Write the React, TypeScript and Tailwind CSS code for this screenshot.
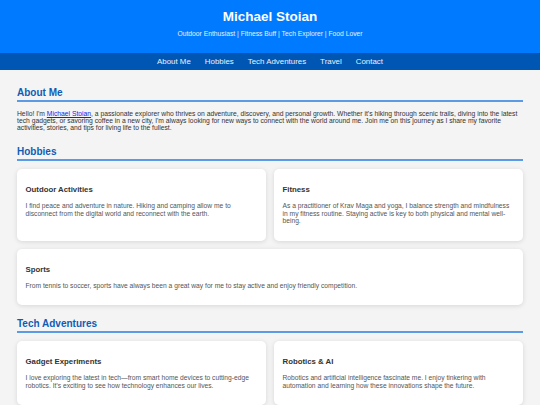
import React from "react";

type Card = { title: string; text: string; wide?: boolean };

const hobbies: Card[] = [
  {
    title: "Outdoor Activities",
    text: "I find peace and adventure in nature. Hiking and camping allow me to disconnect from the digital world and reconnect with the earth.",
  },
  {
    title: "Fitness",
    text: "As a practitioner of Krav Maga and yoga, I balance strength and mindfulness in my fitness routine. Staying active is key to both physical and mental well-being.",
  },
  {
    title: "Sports",
    text: "From tennis to soccer, sports have always been a great way for me to stay active and enjoy friendly competition.",
    wide: true,
  },
];

const tech: Card[] = [
  {
    title: "Gadget Experiments",
    text: "I love exploring the latest in tech\u2014from smart home devices to cutting-edge robotics. It\u2019s exciting to see how technology enhances our lives.",
  },
  {
    title: "Robotics & AI",
    text: "Robotics and artificial intelligence fascinate me. I enjoy tinkering with automation and learning how these innovations shape the future.",
  },
];

const navLinks = ["About Me", "Hobbies", "Tech Adventures", "Travel", "Contact"];

const Section = ({ title, children }: { title: string; children: React.ReactNode }) => (
  <section className="flex flex-col gap-[8.5px]">
    <h2 className="text-[10px] leading-[11.5px] font-bold text-[#0f5cb5] border-b-2 border-[#5b9be6] pb-[1px]">
      {title}
    </h2>
    {children}
  </section>
);

const CardGrid = ({ items }: { items: Card[] }) => (
  <div className="grid grid-cols-2 gap-[8px]">
    {items.map((item) => (
      <div
        key={item.title}
        className={`bg-white rounded-[5px] shadow-[0_1px_5px_rgba(0,0,0,0.12)] px-[8.5px] pt-[16px] pb-[16px] flex flex-col gap-[8px] ${
          item.wide ? "col-span-2" : ""
        }`}
      >
        <h3 className="text-[7.8px] leading-[9px] font-bold text-[#333]">{item.title}</h3>
        <p className="text-[6.7px] leading-[7.5px] text-[#555]">{item.text}</p>
      </div>
    ))}
  </div>
);

export default function App() {
  return (
    <div
      className="min-h-screen bg-[#f4f4f4] text-[#333]"
      style={{ fontFamily: '"Liberation Sans", Arial, sans-serif' }}
    >
      <header className="bg-[#007bff] text-white text-center pt-[8.5px] pb-[15px]">
        <h1 className="text-[13.5px] leading-[15px] font-bold">Michael Stoian</h1>
        <p className="mt-[6px] text-[6.75px] leading-[8px] text-[#e6f0ff]">
          Outdoor Enthusiast | Fitness Buff | Tech Explorer | Food Lover
        </p>
      </header>
      <nav className="bg-[#0056b3] h-[17px] flex items-center justify-center gap-[14px]">
        {navLinks.map((link) => (
          <a key={link} href="#" className="text-[7.9px] leading-[9px] text-[#e8f1ff]">
            {link}
          </a>
        ))}
      </nav>

      <main className="px-[17px] pt-[17.5px] pb-[20px] flex flex-col gap-[13px]">
        <Section title="About Me">
          <p className="text-[6.75px] leading-[7px] text-[#333] mb-[2px] pr-[3px]">
            Hello! I'm{" "}
            <a href="#" className="text-[#1a1aee] underline">
              Michael Stoian
            </a>
            , a passionate explorer who thrives on adventure, discovery, and personal growth. Whether it's hiking through scenic trails, diving into the latest tech gadgets, or savoring coffee in a new city, I'm always looking for new ways to connect with the world around me. Join me on this journey as I share my favorite activities, stories, and tips for living life to the fullest.
          </p>
        </Section>

        <Section title="Hobbies">
          <CardGrid items={hobbies} />
        </Section>

        <Section title="Tech Adventures">
          <CardGrid items={tech} />
        </Section>
      </main>
    </div>
  );
}
